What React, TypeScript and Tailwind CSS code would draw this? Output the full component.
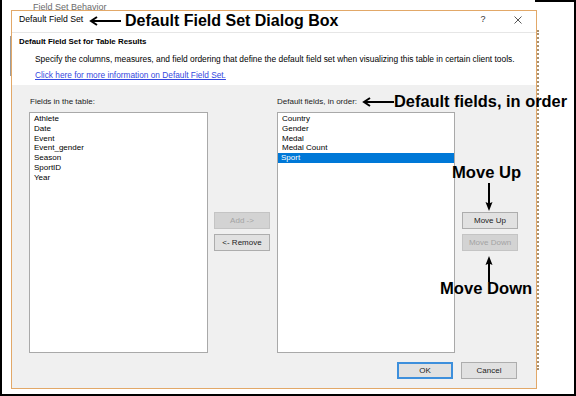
import React from 'react';

const tableFields = ['Athlete', 'Date', 'Event', 'Event_gender', 'Season', 'SportID', 'Year'];
const defaultFields = ['Country', 'Gender', 'Medal', 'Medal Count', 'Sport'];

type BtnProps = { label: string; disabled?: boolean; primary?: boolean };

function DlgButton({ label, disabled, primary }: BtnProps) {
  if (disabled) {
    return (
      <div className="w-[56px] h-[17px] flex items-center justify-center border border-[#c4c4c4] bg-[#d3d3d3] text-[8px] text-[#a3a3a3]">
        {label}
      </div>
    );
  }
  if (primary) {
    return (
      <div className="w-[56px] h-[17px] flex items-center justify-center border-2 border-[#3d8fdc] bg-[#e1e1e1] text-[8px] text-[#222]">
        {label}
      </div>
    );
  }
  return (
    <div className="w-[56px] h-[17px] flex items-center justify-center border border-[#adadad] bg-[#e1e1e1] text-[8px] text-[#222]">
      {label}
    </div>
  );
}

function FieldList({ items, selected }: { items: string[]; selected?: string }) {
  return (
    <div className="w-full h-[241px] bg-white border border-[#a9a9a9] pt-[1px]">
      {items.map((item) => (
        <div
          key={item}
          className={
            item === selected
              ? 'h-[9.8px] leading-[9.8px] pl-[3px] text-[8px] bg-[#0078d7] text-white'
              : 'h-[9.8px] leading-[9.8px] pl-[4px] text-[8px] text-black'
          }
        >
          {item}
        </div>
      ))}
    </div>
  );
}

function LeftArrow() {
  return (
    <svg width="32" height="10" viewBox="0 0 32 10">
      <line x1="3" y1="5" x2="32" y2="5" stroke="black" strokeWidth="2" />
      <polyline points="8,1 2,5 8,9" fill="none" stroke="black" strokeWidth="2" />
    </svg>
  );
}

function VArrow({ up, length }: { up?: boolean; length: number }) {
  return (
    <svg width="10" height={length} viewBox={`0 0 10 ${length}`}>
      {up ? (
        <>
          <line x1="5" y1="6" x2="5" y2={length} stroke="black" strokeWidth="2" />
          <path d="M1.5 9 L5 0 L8.5 9 L5 7.5 Z" fill="black" />
        </>
      ) : (
        <>
          <line x1="5" y1="0" x2="5" y2={length - 6} stroke="black" strokeWidth="2" />
          <path d={`M1.5 ${length - 9} L5 ${length} L8.5 ${length - 9} L5 ${length - 7.5} Z`} fill="black" />
        </>
      )}
    </svg>
  );
}

export default function App() {
  return (
    <div className="relative w-[576px] h-[396px] overflow-hidden bg-white border-l-2 border-r-2 border-b-2 border-black flex flex-col font-['Liberation_Sans',Arial,sans-serif]">
      {/* Window behind the dialog */}
      <div className="h-[10px] flex shrink-0">
        <div className="w-[533px] h-[10px] overflow-hidden pl-[31px] pt-[3px] text-[9px] leading-[9px] text-[#6b6b6b]">
          Field Set Behavior
        </div>
        <div className="flex-1 border-t-2 border-black" />
      </div>

      <div className="flex">
        <div className="w-[9px] flex justify-end pt-[26px]">
          <div className="w-[1px] h-[40px] bg-[#9c9c9c]" />
        </div>

        {/* Dialog */}
        <div className="w-[526px] h-[379px] border border-[#e2a868] bg-[#f0f0f0] flex flex-col">
          {/* Title bar */}
          <div className="h-[21px] bg-white flex items-start pt-[2px] pl-[7px] pr-[14px]">
            <span className="text-[8.7px] leading-[12px] text-black">Default Field Set</span>
            <span className="ml-auto w-[8px] text-center text-[9px] leading-[12px] text-[#333]">?</span>
            <svg className="ml-[27px] mt-[3px]" width="8" height="8" viewBox="0 0 8 8">
              <path d="M0.5 0.5 L7.5 7.5 M7.5 0.5 L0.5 7.5" stroke="#444" strokeWidth="0.9" />
            </svg>
          </div>
          <div className="h-[1px] bg-[#e6e6e6]" />

          {/* Header */}
          <div className="h-[52px] bg-white flex flex-col pt-[3px]">
            <div className="pl-[7px] h-[12px] leading-[12px] text-[7.9px] font-bold text-black">
              Default Field Set for Table Results
            </div>
            <div className="mt-[5px] pl-[23px] h-[12px] leading-[12px] text-[8.4px] text-black whitespace-nowrap">
              Specify the columns, measures, and field ordering that define the default field set when visualizing this table in certain client tools.
            </div>
            <div className="mt-[4px] pl-[23px] h-[12px] leading-[12px] text-[8.3px] text-[#3548e0] underline">
              Click here for more information on Default Field Set.
            </div>
          </div>

          {/* Body */}
          <div className="flex-1 flex flex-col pt-[11px] pl-[17px] pr-[18px] pb-[9px]">
            <div className="flex">
              <div className="w-[179px] flex flex-col">
                <div className="pl-[1px] h-[11px] leading-[11px] text-[8px] text-[#222]">Fields in the table:</div>
                <div className="mt-[5px]">
                  <FieldList items={tableFields} />
                </div>
              </div>
              <div className="ml-[6px] pt-[116px] flex flex-col gap-[5px]">
                <DlgButton label="Add ->" disabled />
                <DlgButton label="<- Remove" />
              </div>
              <div className="ml-[7px] w-[178px] flex flex-col">
                <div className="h-[11px] leading-[11px] text-[8px] text-[#222]">Default fields, in order:</div>
                <div className="mt-[5px]">
                  <FieldList items={defaultFields} selected="Sport" />
                </div>
              </div>
              <div className="ml-[7px] pt-[116px] flex flex-col gap-[5px]">
                <DlgButton label="Move Up" />
                <DlgButton label="Move Down" disabled />
              </div>
            </div>
            <div className="mt-[9px] flex justify-end gap-[8px] pr-[1px]">
              <DlgButton label="OK" primary />
              <DlgButton label="Cancel" />
            </div>
          </div>
        </div>

        <div className="flex-1 pt-[20px]">
          <div className="w-[2px] h-[340px] border-l-2 border-dotted border-[#a89070]" />
        </div>
      </div>

      {/* Callouts */}
      <div className="absolute left-[87px] top-[16px]">
        <LeftArrow />
      </div>
      <div className="absolute left-[123px] top-[13px] text-[16px] leading-none font-bold text-black whitespace-nowrap">
        Default Field Set Dialog Box
      </div>

      <div className="absolute left-[360px] top-[97px]">
        <LeftArrow />
      </div>
      <div className="absolute left-[392px] top-[93px] text-[16.4px] leading-none font-bold text-black whitespace-nowrap">
        Default fields, in order
      </div>

      <div className="absolute left-[450px] top-[165px] text-[16.6px] leading-none font-bold text-black whitespace-nowrap">
        Move Up
      </div>
      <div className="absolute left-[482px] top-[183px]">
        <VArrow length={28} />
      </div>

      <div className="absolute left-[482px] top-[256px]">
        <VArrow up length={26} />
      </div>
      <div className="absolute left-[438px] top-[281px] text-[16.6px] leading-none font-bold text-black whitespace-nowrap">
        Move Down
      </div>
    </div>
  );
}
